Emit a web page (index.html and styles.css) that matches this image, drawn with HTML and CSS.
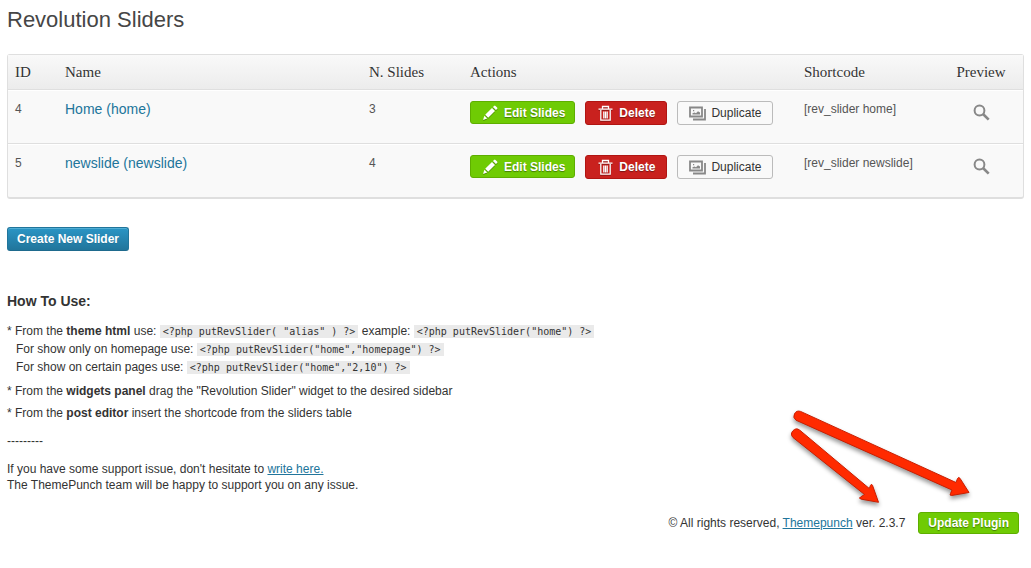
FILE: index.html
```
<!DOCTYPE html>
<html lang="en">
<head>
    <meta charset="UTF-8">
    <meta name="viewport" content="width=device-width, initial-scale=1.0">
    <title>Revolution Sliders</title>
    <link rel="stylesheet" href="styles.css">
</head>
<body>
    <!-- Icon set -->
    <svg class="icon-set" aria-hidden="true">
        <symbol id="icon-pencil" viewBox="0 0 17 17">
            <path d="M1 16l1.400-4.200 2.800 2.800z M3.200 10.800l6.800-6.800 3 3-6.800 6.800z M10.900 3.100l1.200-1.200q.7-.7 1.400 0l1.600 1.600q.7.7 0 1.400l-1.200 1.200z"/>
        </symbol>
        <symbol id="icon-trash" viewBox="0 0 17 17">
            <path d="M5.500 4V1.500h6V4M1.500 4.200h14M3.800 5v10.200h9.400V5M6.800 6.500v7M8.500 6.500v7M10.200 6.500v7" fill="none" stroke="currentColor" stroke-width="1.300"/>
        </symbol>
        <symbol id="icon-images" viewBox="0 0 17 17">
            <path d="M1 2.500h12v9H1z M16 4v10.500H4" fill="none" stroke="currentColor" stroke-width="1.800"/>
            <path d="M3.500 9.500V8.200l2-.7 1.500.7 2-2 2 1.300v2z M4 5h1.200v1.200H4z"/>
        </symbol>
        <symbol id="icon-search" viewBox="0 0 17 17">
            <circle cx="6.500" cy="6.500" r="4.900" fill="none" stroke="currentColor" stroke-width="2"/>
            <path d="M10 10l5.700 5.700" fill="none" stroke="currentColor" stroke-width="2.600"/>
        </symbol>
    </svg>

    <h1>Revolution Sliders</h1>

    <!-- Sliders table -->
    <table class="sliders">
        <thead>
            <tr>
                <th class="col-id">ID</th>
                <th>Name</th>
                <th class="col-slides">N. Slides</th>
                <th class="col-actions">Actions</th>
                <th class="col-code">Shortcode</th>
                <th class="col-preview">Preview</th>
            </tr>
        </thead>
        <tbody>
            <tr>
                <td>4</td>
                <td class="name"><a href="#home">Home (home)</a></td>
                <td>3</td>
                <td>
                    <div class="actions">
                        <button class="btn green short"><svg><use href="#icon-pencil"/></svg>Edit Slides</button>
                        <button class="btn red"><svg><use href="#icon-trash"/></svg>Delete</button>
                        <button class="btn plain"><svg><use href="#icon-images"/></svg>Duplicate</button>
                    </div>
                </td>
                <td>[rev_slider home]</td>
                <td class="col-preview"><button class="preview" aria-label="Preview home"><svg><use href="#icon-search"/></svg></button></td>
            </tr>
            <tr>
                <td>5</td>
                <td class="name"><a href="#newslide">newslide (newslide)</a></td>
                <td>4</td>
                <td>
                    <div class="actions">
                        <button class="btn green short"><svg><use href="#icon-pencil"/></svg>Edit Slides</button>
                        <button class="btn red"><svg><use href="#icon-trash"/></svg>Delete</button>
                        <button class="btn plain"><svg><use href="#icon-images"/></svg>Duplicate</button>
                    </div>
                </td>
                <td>[rev_slider newslide]</td>
                <td class="col-preview"><button class="preview" aria-label="Preview newslide"><svg><use href="#icon-search"/></svg></button></td>
            </tr>
        </tbody>
    </table>

    <button class="btn blue">Create New Slider</button>

    <!-- Help text -->
    <div class="help">
        <h2>How To Use:</h2>
        <ul>
            <li>* From the <b>theme html</b> use: <code>&lt;?php putRevSlider( "alias" ) ?&gt;</code> example: <code>&lt;?php putRevSlider("home") ?&gt;</code>
                <div class="indent">For show only on homepage use: <code>&lt;?php putRevSlider("home","homepage") ?&gt;</code></div>
                <div class="indent">For show on certain pages use: <code>&lt;?php putRevSlider("home","2,10") ?&gt;</code></div>
            </li>
            <li>* From the <b>widgets panel</b> drag the "Revolution Slider" widget to the desired sidebar</li>
            <li>* From the <b>post editor</b> insert the shortcode from the sliders table</li>
        </ul>
        <p class="line">---------</p>
        <p>If you have some support issue, don't hesitate to <a href="#support">write here.</a><br>
        The ThemePunch team will be happy to support you on any issue.</p>
    </div>

    <!-- Footer -->
    <div class="footer">
        <span>© All rights reserved, <a href="#themepunch">Themepunch</a> ver. 2.3.7</span>
        <button class="btn green update">Update Plugin</button>

        <!-- Arrows pointing at the version and the button -->
        <svg class="arrows" viewBox="0 0 200 112" aria-hidden="true">
            <path d="M20.500 11.400L176 82.500 177.500 78.500Q178.300 76.500 180 78.300L189 92.500 171.500 95.500Q169.300 95.500 170.500 93.500L172 90 16 20.200A5 5 0 0 1 20.500 11.400z"/>
            <path d="M19.800 30.200L89.300 88.500 90.500 85.300Q91.500 83.300 92.500 85.300L98.500 102.300 80.500 99Q78.500 98 80.500 97L84.500 94.500 13 37.500A5 5 0 0 1 19.800 30.200z"/>
        </svg>
    </div>
</body>
</html>
```
FILE: styles.css
```
/* Body and general settings */
body {
    margin: 0;
    padding: 7px;
    background-color: #fff;
    color: #333;
    font-family: "Liberation Sans", Arial, sans-serif;
    font-size: 12px;
    line-height: 16px;
}

a {
    color: #21759b;
}

.icon-set {
    display: none;
}

h1 {
    margin: 0 0 21px;
    font-size: 22px;
    font-weight: normal;
    line-height: 26px;
    color: #464646;
}

/* Sliders table */
.sliders {
    width: 100%;
    table-layout: fixed;
    border: 1px solid #dfdfdf;
    border-bottom-width: 2px;
    border-radius: 3px;
    border-spacing: 0;
    background-color: #f9f9f9;
    color: #555;
}

.sliders th {
    height: 34px;
    padding: 0 7px;
    border-bottom: 1px solid #dfdfdf;
    background-image: linear-gradient(to bottom, #f9f9f9, #ececec);
    font-family: "Liberation Serif", Georgia, serif;
    font-size: 15px;
    font-weight: normal;
    text-align: left;
    color: #333;
    text-shadow: 0 1px 0 rgba(255, 255, 255, 0.8);
}

.sliders td {
    box-sizing: border-box;
    height: 54px;
    padding: 10px 7px 0;
    border-top: 1px solid #fff;
    border-bottom: 1px solid #dfdfdf;
    vertical-align: top;
}

.sliders tr:last-child td {
    height: 53px;
    border-bottom: none;
}

.col-id {
    width: 36px;
}

.col-slides {
    width: 87px;
}

.col-actions {
    width: 320px;
}

.col-code {
    width: 128px;
}

.sliders .col-preview {
    width: 70px;
    text-align: center;
}

.name a {
    font-size: 14px;
    text-decoration: none;
}

.actions {
    display: flex;
    align-items: flex-start;
    gap: 10px;
}

/* Buttons */
.btn {
    display: inline-flex;
    align-items: center;
    gap: 5px;
    height: 24px;
    padding: 0 11px;
    border: 1px solid;
    border-radius: 3px;
    font-family: inherit;
    font-size: 12px;
    font-weight: bold;
    color: #fff;
    white-space: nowrap;
    cursor: pointer;
}

.btn svg,
.preview svg {
    width: 17px;
    height: 17px;
    fill: currentColor;
}

.short {
    height: 23px;
    padding: 0 9px 0 11px;
}

.green {
    background-color: #6fcb04;
    border-color: #5eae00;
    text-shadow: 0 1px 1px rgba(0, 0, 0, 0.4);
}

.red {
    background-color: #c9211e;
    border-color: #b01512;
    text-shadow: 0 1px 1px rgba(0, 0, 0, 0.4);
}

.green svg,
.red svg {
    filter: drop-shadow(0 1px 0 rgba(0, 0, 0, 0.3));
}

.plain {
    background-color: #f9f9f9;
    border-color: #bbb;
    font-weight: normal;
    color: #333;
}

.plain svg {
    color: #888;
}

.blue {
    margin-top: 28px;
    padding: 0 9px;
    background-image: linear-gradient(to bottom, #2a95c5, #21759b);
    border-color: #21759b;
    border-bottom-color: #1e6a8d;
    box-shadow: inset 0 1px 0 rgba(120, 200, 230, 0.5);
    text-shadow: 0 1px 0 rgba(0, 0, 0, 0.1);
}

.preview {
    padding: 3px 0 0;
    border: none;
    background: none;
    color: #888;
    cursor: pointer;
}

/* Help text */
.help {
    margin-top: 40px;
}

h2 {
    margin: 0 0 11px;
    font-size: 14px;
    line-height: 20px;
}

ul {
    margin: 0;
    padding: 0;
    list-style: none;
}

li {
    margin-bottom: 4px;
    line-height: 18px;
}

li:first-child {
    margin-bottom: 6px;
}

.indent {
    padding-left: 9px;
}

code {
    padding: 1px 3px;
    background-color: #eaeaea;
    font-family: "DejaVu Sans Mono", monospace;
    font-size: 10px;
    line-height: 12px;
}

p {
    margin: 0;
}

.line {
    margin: 11px 0 12px;
}

/* Footer */
.footer {
    position: relative;
    display: flex;
    justify-content: flex-end;
    align-items: center;
    gap: 13px;
    margin-top: 19px;
    padding-right: 5px;
}

.update {
    height: 22px;
    padding: 0 9px;
}

.arrows {
    position: absolute;
    right: 44px;
    bottom: 100%;
    width: 200px;
    height: 112px;
    overflow: visible;
    fill: #ff2a00;
    stroke: #c81e00;
    stroke-width: 1;
    stroke-linejoin: round;
    pointer-events: none;
    filter: drop-shadow(0 3px 2px rgba(0, 0, 0, 0.4));
}
```
